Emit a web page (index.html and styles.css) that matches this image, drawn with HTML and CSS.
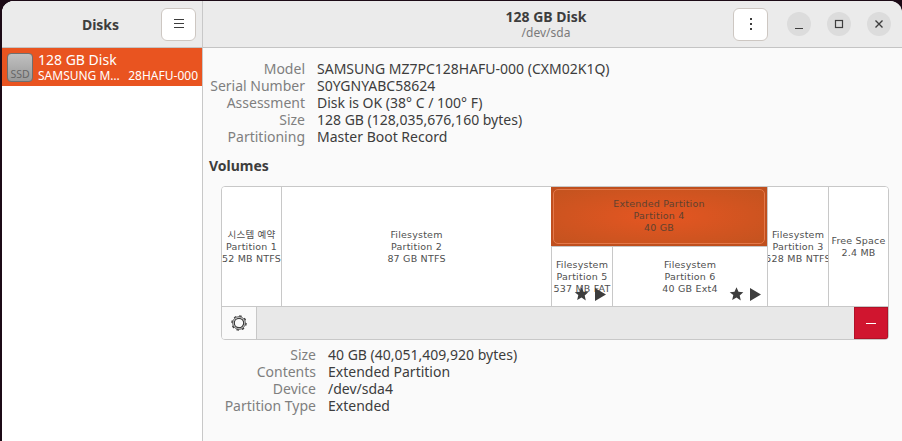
FILE: index.html
```html
<!DOCTYPE html>
<html lang="en">
<head>
<meta charset="utf-8">
<title>Disks</title>
<link rel="stylesheet" href="styles.css">
</head>
<body>
<div class="window">
  <aside class="sidebar">
    <header class="side-head">
      <span class="side-title">Disks</span>
      <button class="hbtn side-menu" aria-label="Menu">
        <svg width="16" height="16" viewBox="0 0 16 16"><path d="M3 3.500h10M3 7.500h10M3 11.500h10" stroke="#3d3d3d" stroke-width="1"/></svg>
      </button>
    </header>
    <div class="disk-row">
      <div class="disk-icon"><span>SSD</span></div>
      <div class="disk-text">
        <div class="disk-name">128 GB Disk</div>
        <div class="disk-sub"><span>SAMSUNG M…</span><span>28HAFU-000</span></div>
      </div>
    </div>
  </aside>
  <main class="main">
    <header class="main-head">
      <div class="title-block">
        <div class="title">128 GB Disk</div>
        <div class="subtitle">/dev/sda</div>
      </div>
      <button class="hbtn kebab" aria-label="More">
        <svg width="16" height="16" viewBox="0 0 16 16"><g fill="#3d3d3d"><rect x="7" y="2" width="2" height="2"/><rect x="7" y="7" width="2" height="2"/><rect x="7" y="12" width="2" height="2"/></g></svg>
      </button>
      <div class="controls">
        <button class="wc" aria-label="Minimize"><svg width="12" height="12" viewBox="0 0 12 12"><path d="M2 10.500h8" stroke="#3d3d3d" stroke-width="1.200"/></svg></button>
        <button class="wc" aria-label="Maximize"><svg width="12" height="12" viewBox="0 0 12 12"><rect x="2.500" y="2.500" width="7" height="7" fill="none" stroke="#3d3d3d" stroke-width="1.200"/></svg></button>
        <button class="wc" aria-label="Close"><svg width="12" height="12" viewBox="0 0 12 12"><path d="M2.500 2.500l7 7M9.500 2.500l-7 7" stroke="#3d3d3d" stroke-width="1.400"/></svg></button>
      </div>
    </header>
    <div class="content">
      <dl class="info disk-info">
        <dt>Model</dt><dd>SAMSUNG MZ7PC128HAFU-000 (CXM02K1Q)</dd>
        <dt>Serial Number</dt><dd>S0YGNYABC58624</dd>
        <dt>Assessment</dt><dd>Disk is OK (38° C / 100° F)</dd>
        <dt>Size</dt><dd>128 GB (128,035,676,160 bytes)</dd>
        <dt>Partitioning</dt><dd>Master Boot Record</dd>
      </dl>
      <h2 class="volumes">Volumes</h2>
      <section class="volume-box">
        <div class="map">
          <div class="part p1"><span>시스템 예약</span><span>Partition 1</span><span>52 MB NTFS</span></div>
          <div class="part p2"><span>Filesystem</span><span>Partition 2</span><span>87 GB NTFS</span></div>
          <div class="ext">
            <div class="ext-head"><div class="ext-inner"><span>Extended Partition</span><span>Partition 4</span><span>40 GB</span></div></div>
            <div class="ext-children">
              <div class="part p5"><span>Filesystem</span><span>Partition 5</span><span>537 MB FAT</span>
                <div class="marks">
                  <svg width="15" height="14" viewBox="0 0 14 14"><path d="M7 .3l2 4.500 4.800.5-3.600 3.200 1.100 4.900L7 10.400 2.700 12.900l1.100-4.900L.2 5.300 5 4.800z" fill="#3d3d3d"/></svg>
                  <svg width="11" height="13" viewBox="0 0 11 13"><path d="M0 0l11 6.500L0 13z" fill="#3d3d3d"/></svg>
                </div>
              </div>
              <div class="part p6"><span>Filesystem</span><span>Partition 6</span><span>40 GB Ext4</span>
                <div class="marks">
                  <svg width="15" height="14" viewBox="0 0 14 14"><path d="M7 .3l2 4.500 4.800.5-3.600 3.200 1.100 4.900L7 10.400 2.700 12.900l1.100-4.900L.2 5.300 5 4.800z" fill="#3d3d3d"/></svg>
                  <svg width="11" height="13" viewBox="0 0 11 13"><path d="M0 0l11 6.500L0 13z" fill="#3d3d3d"/></svg>
                </div>
              </div>
            </div>
          </div>
          <div class="part p3"><span>Filesystem</span><span>Partition 3</span><span>528 MB NTFS</span></div>
          <div class="part p7"><span>Free Space</span><span>2.4 MB</span></div>
        </div>
        <div class="toolbar">
          <button class="tool gear" aria-label="Additional options">
            <svg width="16" height="16" viewBox="0 0 16 16" fill="none" stroke="#3d3d3d"><circle cx="8" cy="8" r="4.700" stroke-width="1.200"/><circle cx="8" cy="8" r="6.300" stroke-width=".9"/><circle cx="8" cy="8" r="7.100" stroke-width="1.300" stroke-dasharray="2.500 3.076"/></svg>
          </button>
          <span class="tool-fill"></span>
          <button class="tool remove" aria-label="Delete"><svg width="12" height="12" viewBox="0 0 12 12"><path d="M1 6.500h10" stroke="#fff" stroke-width="1"/></svg></button>
        </div>
      </section>
      <dl class="info part-info">
        <dt>Size</dt><dd>40 GB (40,051,409,920 bytes)</dd>
        <dt>Contents</dt><dd>Extended Partition</dd>
        <dt>Device</dt><dd>/dev/sda4</dd>
        <dt>Partition Type</dt><dd>Extended</dd>
      </dl>
    </div>
  </main>
</div>
</body>
</html>
```
FILE: styles.css
```css
* { box-sizing: border-box; }
html, body { margin: 0; height: 100%; }
body {
  background: #1c0a16;
  padding: 1px 0 0 2px;
  overflow: hidden;
  font-family: "Noto Sans", "Liberation Sans", sans-serif;
  font-size: 14px;
  color: #3d3d3d;
}
button { padding: 0; margin: 0; font: inherit; display: flex; align-items: center; justify-content: center; }
.window {
  height: 440px;
  display: flex;
  border-radius: 12px 12px 0 0;
  overflow: hidden;
  background: #fafafa;
}
.sidebar { width: 201px; flex: none; background: #fff; border-right: 1px solid #c8c8c8; }
.side-head, .main-head {
  height: 47px;
  background: #ebebeb;
  border-bottom: 1px solid #c4c4c4;
  display: flex;
  align-items: center;
}
.side-head { padding: 0 6px 0 0; }
.side-title { flex: 1; text-align: center; font-weight: 700; font-size: 14px; padding-left: 38px; }
.hbtn {
  flex: none;
  width: 35px;
  height: 33px;
  background: #fff;
  border: 1px solid #cdc7c2;
  border-radius: 6px;
}
.disk-row { height: 38px; background: #e95420; color: #fff; display: flex; align-items: center; padding-left: 5px; gap: 5px; }
.disk-icon {
  flex: none;
  width: 26px;
  height: 29px;
  border: 1px solid #6f6f6f;
  border-radius: 4px;
  background: linear-gradient(#c0c0c0, #9a9a9a);
  display: flex;
  align-items: flex-end;
  justify-content: center;
  overflow: hidden;
  color: #666;
  font-size: 10.500px;
  line-height: 13px;
}
.disk-text { flex: 1; min-width: 0; white-space: nowrap; padding-right: 4px; }
.disk-name { font-size: 14px; line-height: 17px; }
.disk-sub { font-size: 12px; line-height: 15px; display: flex; justify-content: space-between; }
.main { flex: 1; min-width: 0; display: flex; flex-direction: column; }
.main-head { padding: 0 11px 0 0; }
.title-block { flex: 1; text-align: center; padding-left: 156px; }
.title { font-weight: 700; font-size: 14px; line-height: 16px; }
.subtitle { font-size: 12px; line-height: 14px; margin-top: 1px; color: #7a7a7a; }
.controls { display: flex; gap: 16px; margin-left: 19px; }
.wc { width: 24px; height: 24px; border: 0; border-radius: 50%; background: #dcdcdc; }
.content { flex: 1; padding: 12px 13px 0 6px; }
.info {
  display: grid;
  margin: 0;
  line-height: 17px;
  column-gap: 12px;
  font-size: 14px;
}
.info dt { text-align: right; color: #7f7f7f; }
.info dd { margin: 0; color: #3d3d3d; white-space: nowrap; }
.disk-info { grid-template-columns: 96px 1fr; }
.part-info { grid-template-columns: 107px 1fr; margin-top: 6px; }
.volumes { margin: 12px 0 0; font-size: 14px; line-height: 17px; font-weight: 700; }
.volume-box {
  margin: 12px 0 0 12px;
  border: 1px solid #c8c8c8;
  border-radius: 4px;
  overflow: hidden;
  background: #fff;
}
.map { height: 120px; display: flex; border-bottom: 1px solid #c8c8c8; }
.part {
  position: relative;
  display: flex;
  flex-direction: column;
  align-items: center;
  justify-content: center;
  font-family: "DejaVu Sans", "Noto Sans CJK KR", sans-serif;
  font-size: 9.500px;
  letter-spacing: .2px;
  line-height: 12px;
  color: #4f4f4f;
  white-space: nowrap;
  overflow: hidden;
  background: #fff;
}
.p2, .p3, .p5, .p6, .p7 { border-left: 1px solid #c8c8c8; }
.p1 { width: 59px; }
.p2 { width: 270px; }
.ext { width: 216px; display: flex; flex-direction: column; }
.p3 { width: 61px; }
.p7 { flex: 1; }
.ext-head {
  height: 59px;
  padding: 2px;
  background: #bf4f1e;
}
.ext-inner {
  height: 100%;
  display: flex;
  flex-direction: column;
  align-items: center;
  justify-content: center;
  padding-bottom: 2px;
  font-family: "DejaVu Sans", sans-serif;
  font-size: 9.500px;
  letter-spacing: .2px;
  line-height: 12px;
  color: #60412f;
  background: radial-gradient(ellipse at center, #e55622, #c5531f 95%);
  border: 1.500px solid #e4784a;
  border-radius: 5px;
}
.ext-children { flex: 1; display: flex; border-top: 1px solid #c8c8c8; }
.p5 { width: 61px; }
.p6 { flex: 1; }
.marks {
  position: absolute;
  right: 6px;
  bottom: 5px;
  display: flex;
  align-items: center;
  gap: 6px;
}
.toolbar { height: 32px; display: flex; background: #e8e8e8; }
.tool { border: 0; background: none; }
.gear { width: 35px; background: #fafafa; border-right: 1px solid #c8c8c8; }
.tool-fill { flex: 1; }
.remove { width: 34px; background: #d0152f; border: 1px solid #b01228; }
```
